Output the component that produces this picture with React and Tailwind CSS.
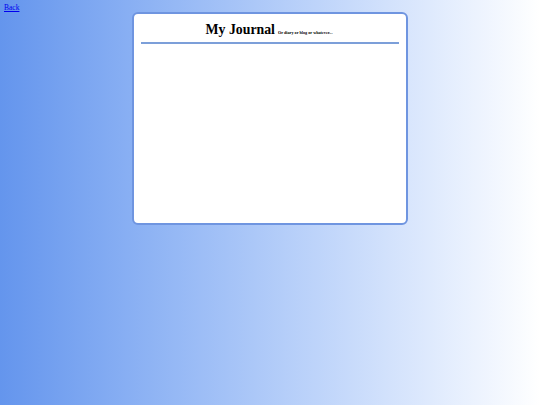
export default function App() {
  return (
    <div
      className="min-h-[405px] w-full bg-gradient-to-r from-[#6495ed] to-white pt-[3px] px-[4px]"
      style={{ fontFamily: '"Liberation Serif", "Times New Roman", serif' }}
    >
      <a href="#" className="block w-fit text-[7.5px] leading-[9px] text-[#0000ee] underline">
        Back
      </a>
      <div className="mx-auto w-[276px] h-[213px] border-2 border-[#6f95e0] rounded-[6px] bg-white px-[7px]">
        <div className="flex items-baseline justify-center pt-[7px] pb-[3px] pr-[2px]">
          <span className="text-[13.8px] font-bold leading-[18px] text-black">My Journal</span>
          <span className="ml-[3px] text-[4.2px] font-bold text-black">Or diary or blog or whatever...</span>
        </div>
        <div className="h-[2px] bg-[#7c9fd9]" />
      </div>
    </div>
  );
}
